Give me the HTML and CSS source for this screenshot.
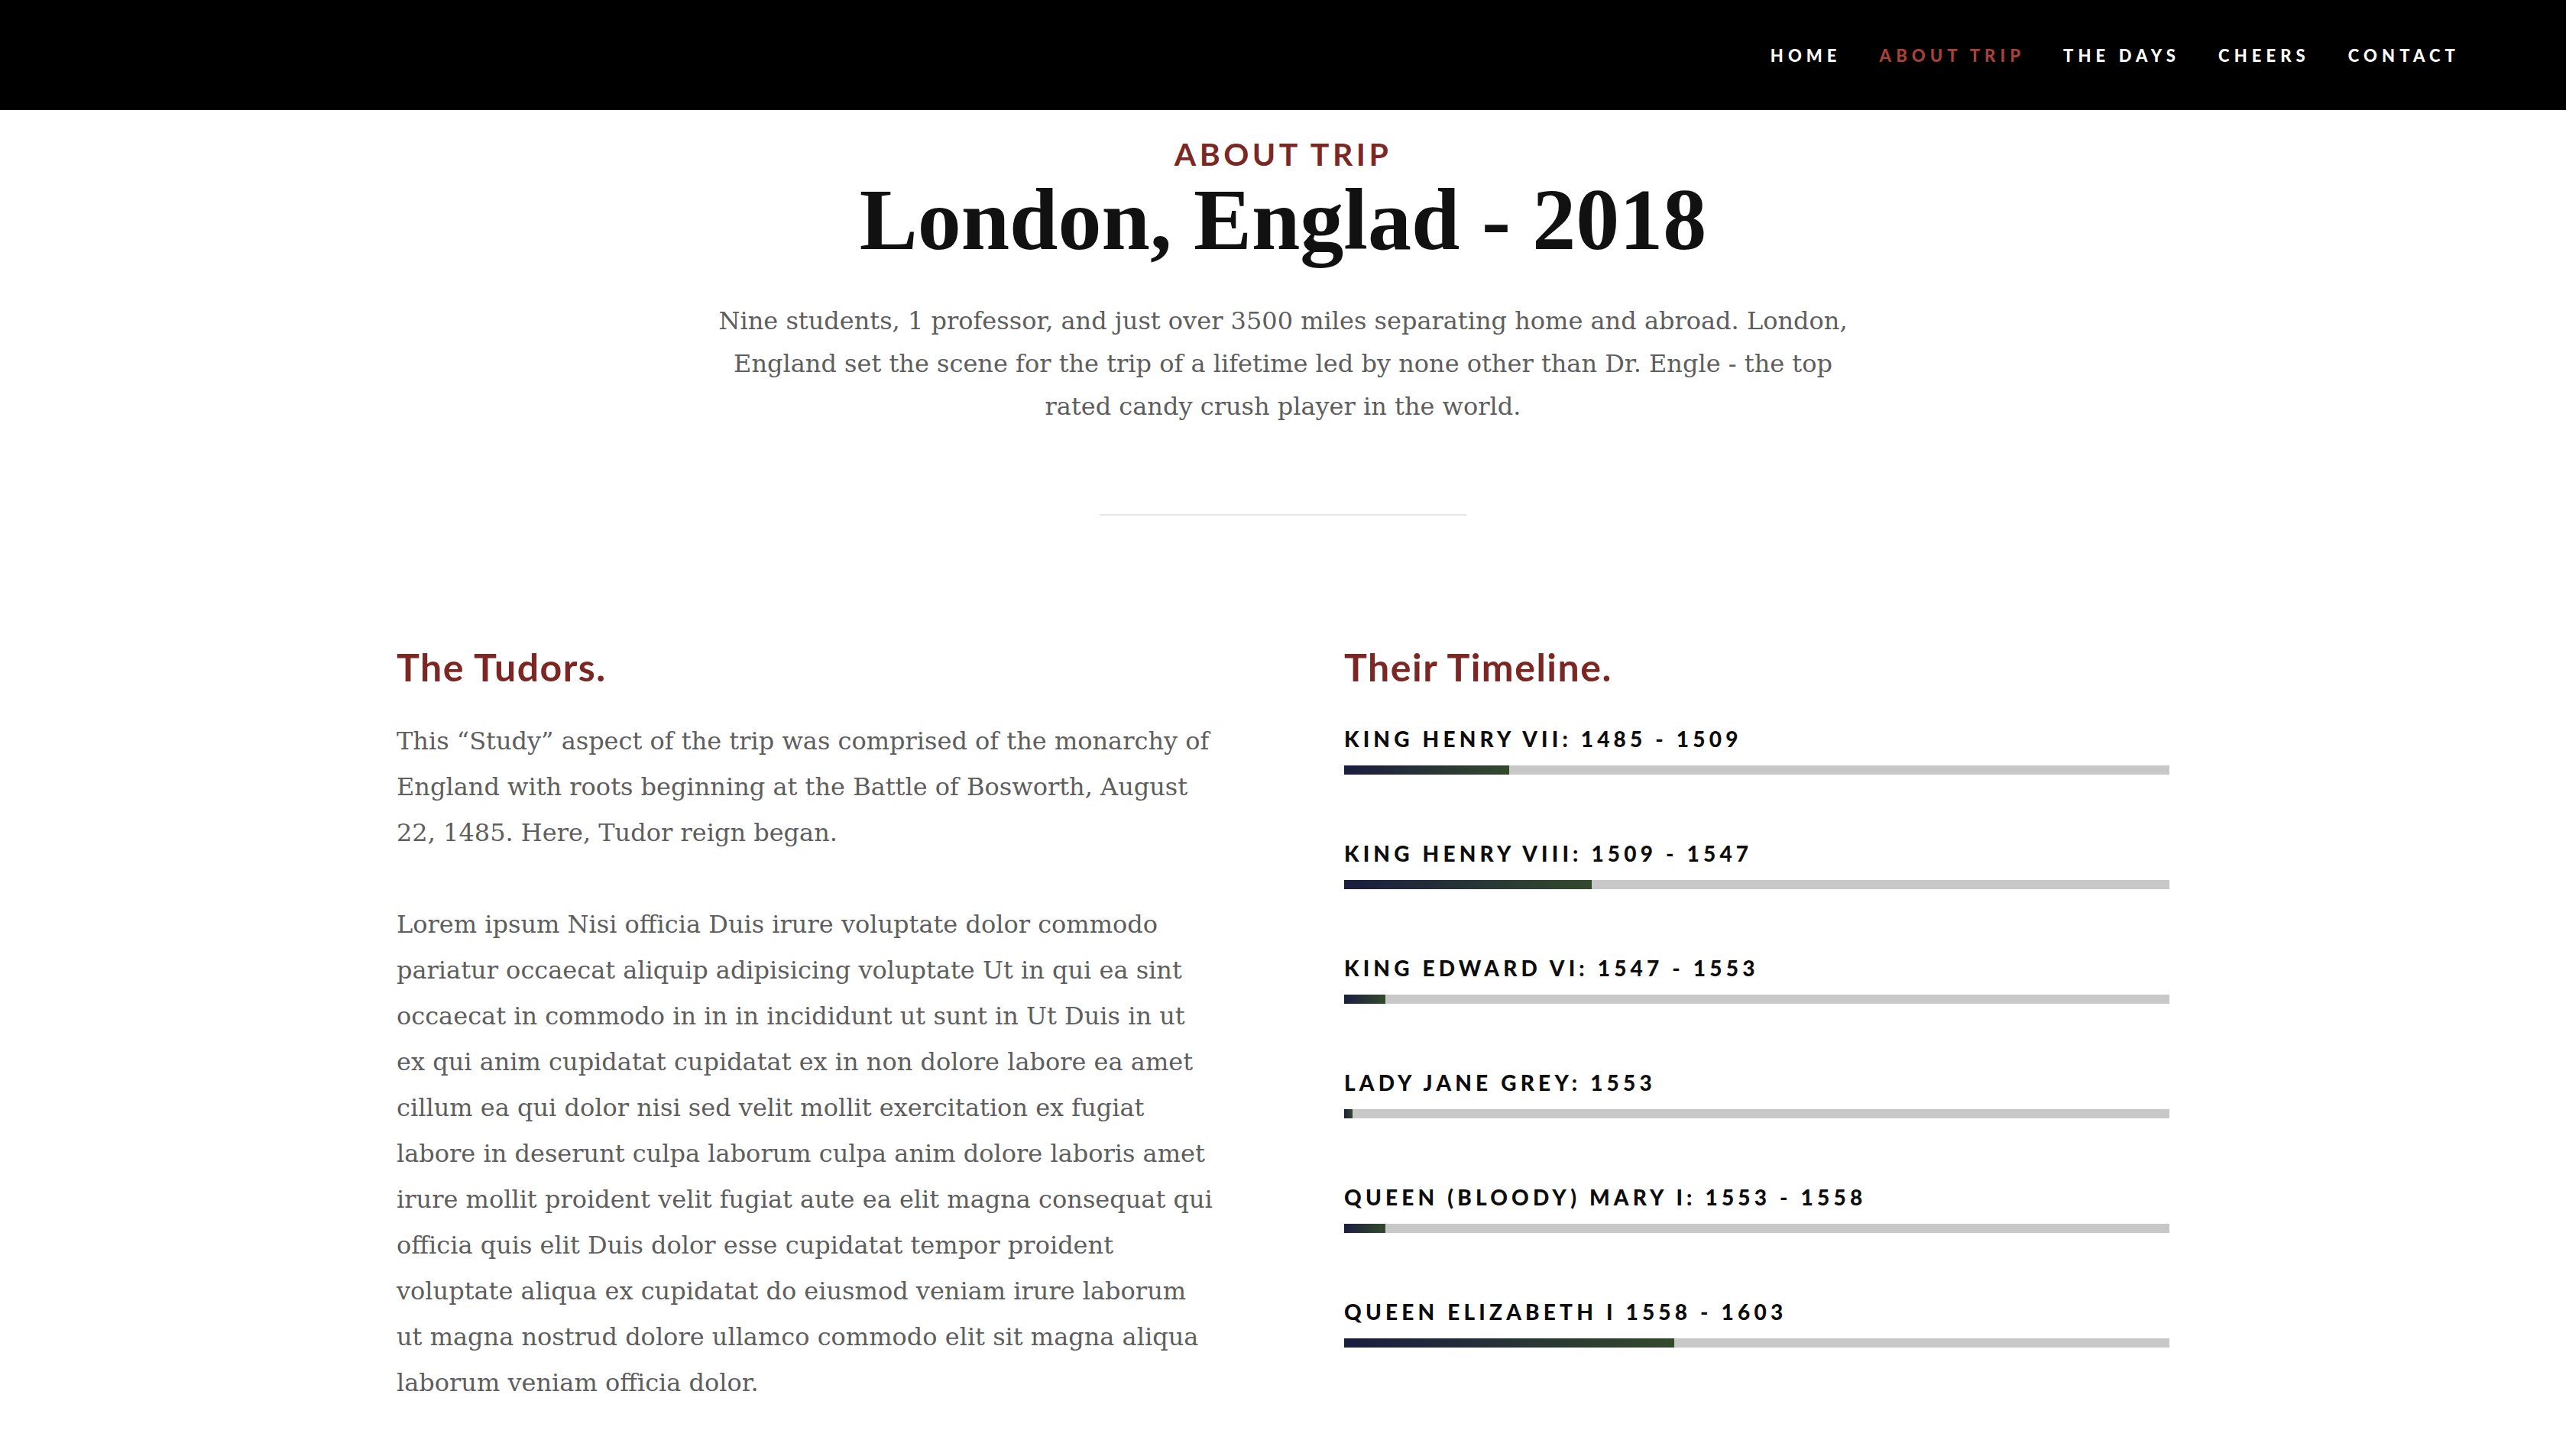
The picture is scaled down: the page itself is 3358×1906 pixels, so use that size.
FILE: index.html
```html
<!DOCTYPE html>
<html lang="en">
<head>
<meta charset="utf-8">
<title>About Trip - London, Englad 2018</title>
<link rel="stylesheet" href="styles.css">
</head>
<body>
<header class="topbar">
  <nav class="menu">
    <a class="menu-link" href="#">HOME</a>
    <a class="menu-link is-active" href="#">ABOUT TRIP</a>
    <a class="menu-link" href="#">THE DAYS</a>
    <a class="menu-link" href="#">CHEERS</a>
    <a class="menu-link" href="#">CONTACT</a>
  </nav>
</header>
<main class="about">
  <section class="intro">
    <h3 class="eyebrow">ABOUT TRIP</h3>
    <h1 class="title">London, Englad - 2018</h1>
    <p class="lead">Nine students, 1 professor, and just over 3500 miles separating home and abroad. London, England set the scene for the trip of a lifetime led by none other than Dr. Engle - the top rated candy crush player in the world.</p>
    <hr class="divider">
  </section>
  <section class="columns">
    <div class="col">
      <h2 class="col-title">The Tudors.</h2>
      <p class="copy">This “Study” aspect of the trip was comprised of the monarchy of England with roots beginning at the Battle of Bosworth, August 22, 1485. Here, Tudor reign began.</p>
      <p class="copy">Lorem ipsum Nisi officia Duis irure voluptate dolor commodo pariatur occaecat aliquip adipisicing voluptate Ut in qui ea sint occaecat in commodo in in in incididunt ut sunt in Ut Duis in ut ex qui anim cupidatat cupidatat ex in non dolore labore ea amet cillum ea qui dolor nisi sed velit mollit exercitation ex fugiat labore in deserunt culpa laborum culpa anim dolore laboris amet irure mollit proident velit fugiat aute ea elit magna consequat qui officia quis elit Duis dolor esse cupidatat tempor proident voluptate aliqua ex cupidatat do eiusmod veniam irure laborum ut magna nostrud dolore ullamco commodo elit sit magna aliqua laborum veniam officia dolor.</p>
    </div>
    <div class="col">
      <h2 class="col-title">Their Timeline.</h2>
      <ul class="timeline">
        <li class="reign">
          <span class="reign-label">KING HENRY VII: 1485 - 1509</span>
          <div class="track"><div class="fill" style="width:20%"></div></div>
        </li>
        <li class="reign">
          <span class="reign-label">KING HENRY VIII: 1509 - 1547</span>
          <div class="track"><div class="fill" style="width:30%"></div></div>
        </li>
        <li class="reign">
          <span class="reign-label">KING EDWARD VI: 1547 - 1553</span>
          <div class="track"><div class="fill" style="width:5%"></div></div>
        </li>
        <li class="reign">
          <span class="reign-label">LADY JANE GREY: 1553</span>
          <div class="track"><div class="fill" style="width:1%"></div></div>
        </li>
        <li class="reign">
          <span class="reign-label">QUEEN (BLOODY) MARY I: 1553 - 1558</span>
          <div class="track"><div class="fill" style="width:5%"></div></div>
        </li>
        <li class="reign">
          <span class="reign-label">QUEEN ELIZABETH I 1558 - 1603</span>
          <div class="track"><div class="fill" style="width:40%"></div></div>
        </li>
      </ul>
    </div>
  </section>
</main>
</body>
</html>
```
FILE: styles.css
```css
* { box-sizing: border-box; }

body {
  margin: 0;
  background: #fff;
  font-family: "DejaVu Serif", "Liberation Serif", serif;
  color: #5e5e5e;
}

.topbar {
  height: 144px;
  background: #000;
  display: flex;
  align-items: center;
  justify-content: flex-end;
  padding-right: 139px;
}

.menu {
  display: flex;
  gap: 50px;
}

.menu-link {
  font-family: "Lato", "Open Sans", sans-serif;
  font-weight: 900;
  font-size: 22px;
  letter-spacing: 6.1px;
  color: #fff;
  text-decoration: none;
}

.menu-link.is-active { color: #a9413a; }

.intro {
  text-align: center;
  padding-top: 34px;
}

.eyebrow {
  margin: 0;
  font-family: "Lato", "Open Sans", sans-serif;
  font-weight: 700;
  font-size: 41px;
  line-height: 48px;
  letter-spacing: 4.5px;
  color: #7b2824;
}

.title {
  margin: 2px 0 0;
  font-family: "Liberation Serif", serif;
  font-weight: 700;
  font-size: 114px;
  line-height: 120px;
  color: #111;
}

.lead {
  max-width: 1500px;
  margin: 44px auto 0;
  font-size: 32px;
  line-height: 56px;
  color: #5e5e5e;
}

.divider {
  width: 480px;
  margin: 113px auto 0;
  border: 0;
  height: 2px;
  background: #e6e6e6;
}

.columns {
  width: 2320px;
  margin: 170px auto 0;
  display: grid;
  grid-template-columns: 1fr 1fr;
  column-gap: 160px;
  padding-bottom: 60px;
}

.col-title {
  margin: 0 0 39px;
  font-family: "Lato", "Open Sans", sans-serif;
  font-weight: 700;
  font-size: 50px;
  line-height: 56px;
  letter-spacing: 1.5px;
  color: #7b2824;
}

.copy {
  max-width: 1072px;
  margin: 0 0 60px;
  font-size: 32px;
  line-height: 60px;
}

.timeline {
  list-style: none;
  margin: 0;
  padding: 10px 0 0;
  display: flex;
  flex-direction: column;
  gap: 86px;
}

.reign {
  display: flex;
  flex-direction: column;
  gap: 18px;
}

.reign-label {
  font-family: "Lato", "Open Sans", sans-serif;
  font-weight: 900;
  font-size: 28px;
  line-height: 34px;
  letter-spacing: 5.2px;
  color: #0d0d0d;
}

.track {
  height: 12px;
  background: #c8c8c8;
}

.fill {
  height: 100%;
  background: linear-gradient(90deg, #1a1d40, #334a2c);
}
```
